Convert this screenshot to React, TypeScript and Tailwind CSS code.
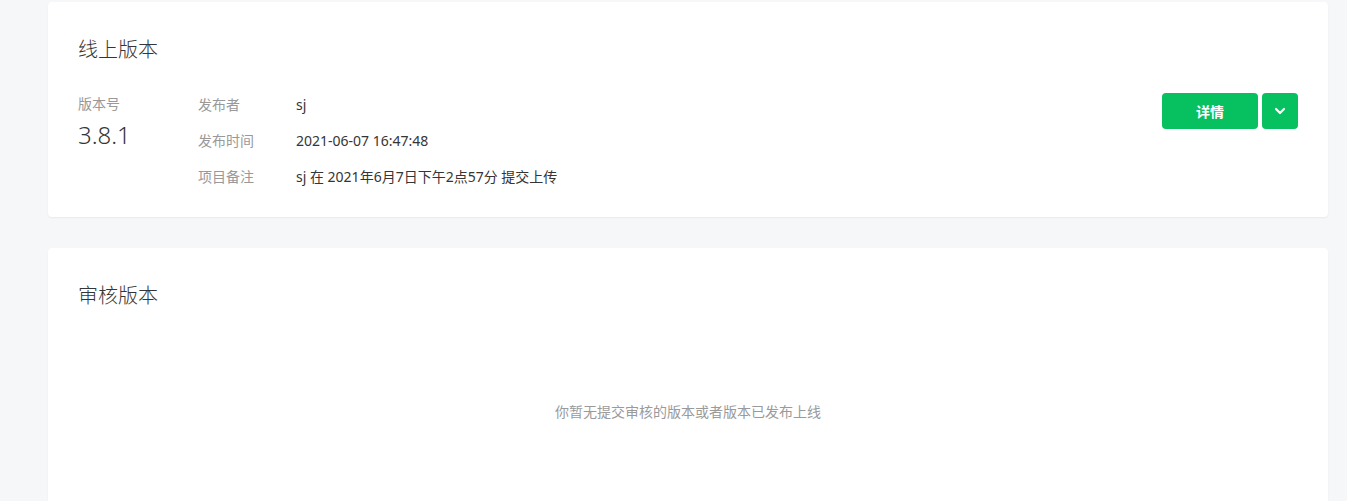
import React from "react";

const font = { fontFamily: '"Noto Sans", "Noto Sans CJK SC", sans-serif' };

function Row({ label, value }: { label: string; value: string }) {
  return (
    <div className="flex h-[22px] items-center">
      <div className="w-[98px] text-[14px] text-[#999999]">{label}</div>
      <div className="text-[14px] text-[#353535]">{value}</div>
    </div>
  );
}

export default function App() {
  return (
    <div className="min-h-screen bg-[#f6f7f9] pl-[48px] pt-[2px]" style={font}>
      <div className="w-[1280px] rounded-[4px] bg-white px-[30px] pt-[34px] pb-[30px] shadow-[0_1px_2px_rgba(0,0,0,0.06)]">
        <div className="text-[20px] font-light leading-[28px] text-[#353535]">线上版本</div>
        <div className="mt-[29px] flex items-start">
          <div className="w-[120px]">
            <div className="h-[22px] text-[14px] leading-[22px] text-[#999999]">版本号</div>
            <div className="mt-[4px] text-[24px] font-light leading-[32px] text-[#353535]">3.8.1</div>
          </div>
          <div className="flex flex-1 flex-col gap-[14px]">
            <Row label="发布者" value="sj" />
            <Row label="发布时间" value="2021-06-07 16:47:48" />
            <Row label="项目备注" value="sj 在 2021年6月7日下午2点57分 提交上传" />
          </div>
          <div className="flex gap-[4px]">
            <button className="h-[36px] w-[96px] rounded-[4px] bg-[#07c160] text-[14px] font-bold text-white">
              详情
            </button>
            <button className="flex h-[36px] w-[36px] items-center justify-center rounded-[4px] bg-[#07c160]">
              <svg width="14" height="14" viewBox="0 0 14 14" fill="none">
                <path d="M3 5L7 9L11 5" stroke="white" strokeWidth="2.2" strokeLinecap="round" strokeLinejoin="round" />
              </svg>
            </button>
          </div>
        </div>
      </div>
      <div className="mt-[31px] h-[300px] w-[1280px] rounded-[4px] bg-white px-[30px] pt-[34px] shadow-[0_1px_2px_rgba(0,0,0,0.06)]">
        <div className="text-[20px] font-light leading-[28px] text-[#353535]">审核版本</div>
        <div className="mt-[91px] text-center text-[14px] leading-[22px] text-[#9a9a9a]">
          你暂无提交审核的版本或者版本已发布上线
        </div>
      </div>
    </div>
  );
}
